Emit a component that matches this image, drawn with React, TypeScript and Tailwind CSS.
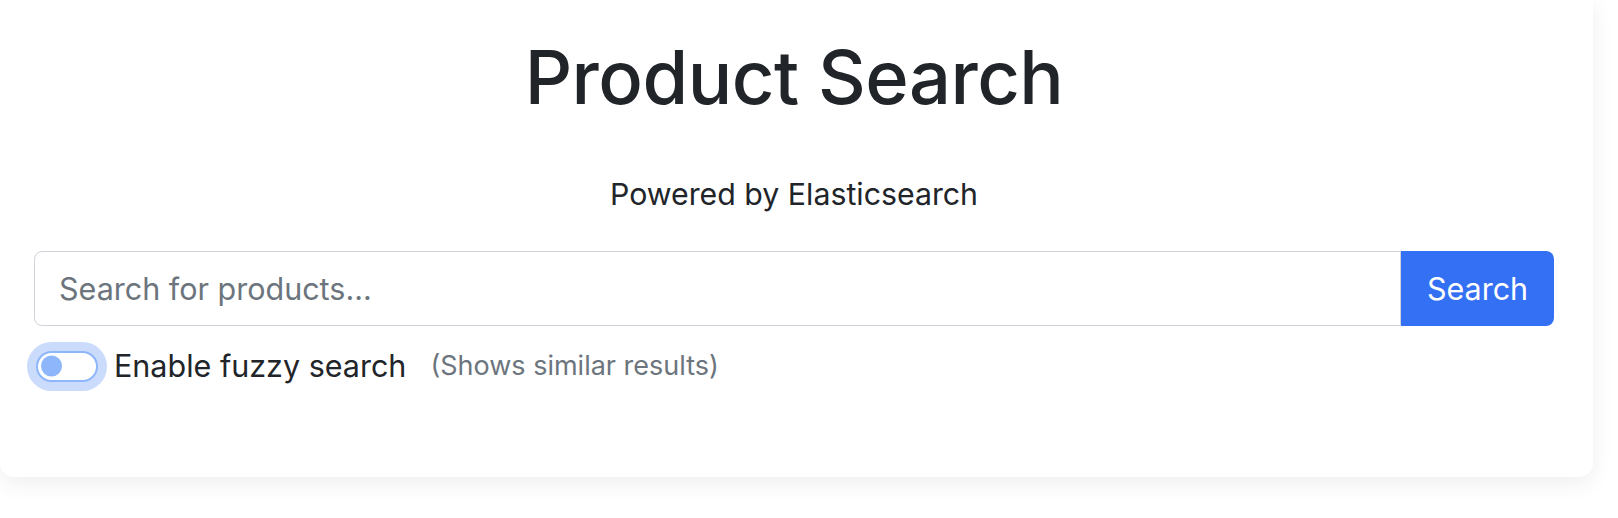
import React from "react";

export default function App() {
  return (
    <div className="min-h-[518px] w-[1618px] bg-white overflow-hidden" style={{ fontFamily: "Inter, 'Noto Sans', sans-serif" }}>
      <div className="w-[1593px] bg-white rounded-b-[14px] shadow-[0_6px_22px_rgba(0,0,0,0.07)] pl-[34px] pr-[39px] pt-[34px] pb-[86px]">
        <h1 className="text-center text-[74px] leading-[86px] font-medium text-[#212529] tracking-[-0.5px]">
          Product Search
        </h1>
        <p className="mt-[56px] text-center text-[30.3px] leading-[36px] text-[#212529]">
          Powered by Elasticsearch
        </p>
        <div className="mt-[39px] flex h-[75px]">
          <input
            type="text"
            placeholder="Search for products..."
            className="flex-1 min-w-0 h-full rounded-l-[8px] border border-[#ced4da] bg-white pl-[24px] text-[30.5px] text-[#212529] placeholder:text-[#6c757d] outline-none"
          />
          <button className="w-[153px] h-full rounded-r-[8px] bg-[#3470f3] text-white text-[30.5px]">
            Search
          </button>
        </div>
        <div className="mt-[15px] flex h-[50px] items-center">
          <div className="relative ml-[2px] w-[62px] h-[31px] rounded-full border-2 border-[#8db6fb] bg-white shadow-[0_0_0_9px_#cadbfc]">
            <div className="absolute left-[3px] top-1/2 -translate-y-1/2 w-[21px] h-[21px] rounded-full bg-[#8db6fb]" />
          </div>
          <span className="ml-[16px] text-[30.5px] leading-[36px] text-[#212529]">Enable fuzzy search</span>
          <span className="ml-[24px] text-[27px] leading-[36px] text-[#6c757d]">(Shows similar results)</span>
        </div>
      </div>
    </div>
  );
}
